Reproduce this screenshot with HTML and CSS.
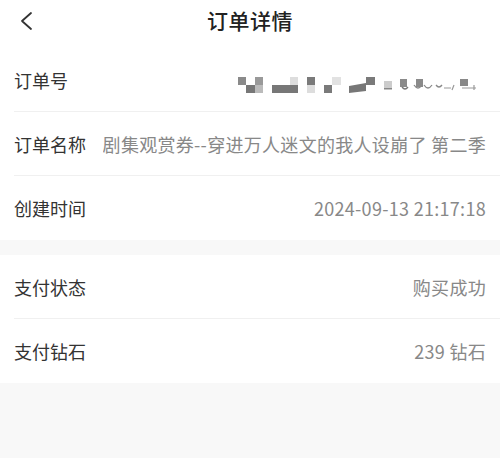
FILE: index.html
```html
<!DOCTYPE html>
<html lang="zh">
<head>
<meta charset="utf-8">
<title>订单详情</title>
<link rel="stylesheet" href="styles.css">
</head>
<body>
<div class="page">
  <header class="topbar">
    <span class="back">
      <svg width="14" height="20" viewBox="0 0 14 20"><path d="M12 2 L3 10 L12 18" fill="none" stroke="#333" stroke-width="1.8" stroke-linecap="round" stroke-linejoin="round"/></svg>
    </span>
    <h1 class="title">订单详情</h1>
  </header>
  <section class="group first">
    <div class="row">
      <span class="label">订单号</span>
      <span class="value mosaic">
        <svg width="248" height="18" viewBox="0 0 248 18">
          <rect x="0" y="1" width="8" height="8" fill="#8a8a8a"/>
          <rect x="8" y="9" width="9" height="8" fill="#777"/>
          <rect x="17" y="1" width="8" height="8" fill="#999"/>
          <rect x="17" y="9" width="8" height="8" fill="#bbb"/>
          <rect x="34" y="9" width="26" height="8" fill="#777"/>
          <rect x="52" y="1" width="8" height="8" fill="#ddd"/>
          <rect x="69" y="1" width="8" height="8" fill="#7a7a7a"/>
          <rect x="69" y="9" width="8" height="8" fill="#ddd"/>
          <rect x="86" y="9" width="8" height="8" fill="#7a7a7a"/>
          <rect x="94" y="1" width="9" height="8" fill="#e2e2e2"/>
          <polygon points="111,10 128,7 128,15 111,17" fill="#777"/>
          <rect x="128" y="1" width="9" height="8" fill="#7a7a7a"/>
          <rect x="146" y="5" width="8" height="7" fill="#ccc"/>
          <rect x="146" y="12" width="8" height="1.5" fill="#888"/>
          <rect x="162" y="3" width="7" height="8" fill="#8a8a8a"/>
          <path d="M164 11 q3 4 6 0" fill="none" stroke="#777" stroke-width="1.3"/>
          <rect x="178" y="3" width="7" height="8" fill="#8a8a8a"/>
          <path d="M176 9 q4 6 8 0 M186 9 q4 6 8 0 M198 9 q3 4 6 0" fill="none" stroke="#888" stroke-width="1.3"/>
          <path d="M206 12 h7 M216 9 l-2 5" fill="none" stroke="#999" stroke-width="1.2"/>
          <rect x="222" y="3" width="8" height="7" fill="#888"/>
          <path d="M224 12 h14 M236 9 v5" fill="none" stroke="#999" stroke-width="1.2"/>
        </svg>
      </span>
    </div>
    <div class="row">
      <span class="label">订单名称</span>
      <span class="value name">剧集观赏券--穿进万人迷文的我人设崩了 第二季</span>
    </div>
    <div class="row">
      <span class="label">创建时间</span>
      <span class="value">2024-09-13 21:17:18</span>
    </div>
  </section>
  <section class="group">
    <div class="row">
      <span class="label">支付状态</span>
      <span class="value">购买成功</span>
    </div>
    <div class="row">
      <span class="label">支付钻石</span>
      <span class="value">239 钻石</span>
    </div>
  </section>
</div>
</body>
</html>
```
FILE: styles.css
```css
* { box-sizing: border-box; margin: 0; padding: 0; }
html, body { height: 100%; }
body {
  background: #f8f8f8;
  font-family: "Noto Sans CJK SC", "Noto Sans", sans-serif;
  color: #333;
}
.page { width: 500px; }
.topbar {
  position: relative;
  height: 40px;
  background: #fff;
  display: flex;
  align-items: center;
  justify-content: center;
}
.back {
  position: absolute;
  left: 19px;
  top: 11px;
  display: flex;
}
.title {
  font-size: 21px;
  font-weight: 500;
  color: #222;
  letter-spacing: 0.5px;
}
.group {
  background: #fff;
}
.group.first {
  padding-top: 8px;
  margin-bottom: 15px;
}
.row {
  height: 64px;
  margin-left: 14px;
  padding-right: 14px;
  display: flex;
  align-items: center;
  justify-content: space-between;
  border-bottom: 1px solid #f0f0f0;
}
.row:last-child { border-bottom: none; }
.label {
  font-size: 18px;
  color: #333;
  white-space: nowrap;
  flex-shrink: 0;
}
.value {
  font-size: 18px;
  color: #888;
  white-space: nowrap;
  text-align: right;
  letter-spacing: 0.3px;
}
.value.name {
  margin-left: 16px;
  overflow: hidden;
  text-overflow: clip;
}
.mosaic { display: flex; padding-top: 10px; }
```
